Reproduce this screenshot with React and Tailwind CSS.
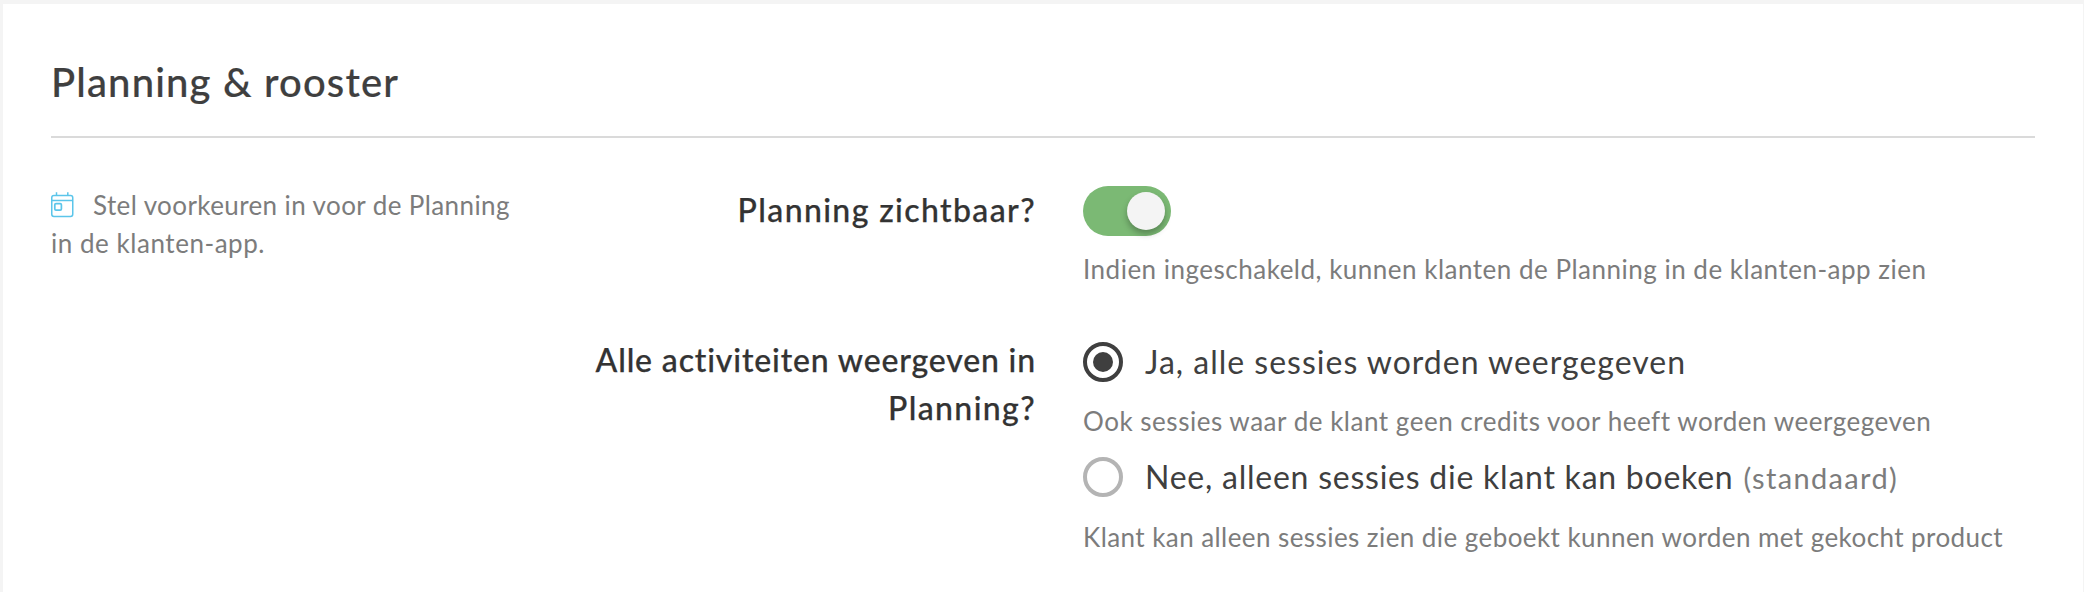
import { useState } from "react";

const options = [
  {
    value: "all",
    label: "Ja, alle sessies worden weergegeven",
    labelClass: "tracking-[1px]",
    hint: "Ook sessies waar de klant geen credits voor heeft worden weergegeven",
    hintClass: "tracking-[0.52px]",
  },
  {
    value: "bookable",
    label: "Nee, alleen sessies die klant kan boeken",
    labelClass: "tracking-[0.76px]",
    note: "(standaard)",
    hint: "Klant kan alleen sessies zien die geboekt kunnen worden met gekocht product",
    hintClass: "tracking-[0.43px]",
  },
];

const CalendarIcon = () => (
  <svg
    className="mr-[18px] inline-block h-[26px] w-6 align-[-3px]"
    viewBox="0 0 24 26"
    fill="none"
    stroke="#5bc5ea"
    strokeWidth="1.5"
  >
    <rect x="0.75" y="3.5" width="21" height="21" rx="2.2" />
    <path d="M0.75 8.5h21M5.5 0.3v3.2M16.8 0.3v3.2" />
    <rect x="3.8" y="11.6" width="6.6" height="6.6" rx="1.2" strokeWidth="1.7" />
  </svg>
);

const Toggle = ({ checked, onChange }) => (
  <button
    type="button"
    role="switch"
    aria-checked={checked}
    onClick={() => onChange(!checked)}
    className={`flex h-[50px] w-[88px] items-center rounded-full px-1.5 ${
      checked ? "justify-end bg-[#7bb974]" : "justify-start bg-[#b4b4b4]"
    }`}
  >
    <span className="size-[38px] rounded-full bg-[#f4f4f4] shadow-[0_4px_6px_rgba(0,0,0,0.28)]" />
  </button>
);

const Radio = ({ checked }) => (
  <span
    className={`mt-1 flex size-10 shrink-0 items-center justify-center rounded-full border-4 ${
      checked ? "border-[#3f3f3f]" : "border-[#b4b4b4]"
    }`}
  >
    {checked && <span className="size-5 rounded-full bg-[#3f3f3f]" />}
  </span>
);

const Hint = ({ className, children }) => (
  <p className={`whitespace-nowrap text-[26px] leading-[38px] text-[#7c7c7c] ${className}`}>
    {children}
  </p>
);

const App = () => {
  const [visible, setVisible] = useState(true);
  const [mode, setMode] = useState("all");

  return (
    <div className="h-screen overflow-hidden bg-[#f4f4f4] pt-1 pr-px pl-[3px] font-['Lato',sans-serif]">
      <section className="h-full bg-white px-12 pt-[54px]">
        <h2 className="border-b-2 border-[#dadada] pb-[30px] text-[40px] leading-[48px] font-medium tracking-[1.16px] text-[#3f3f3f] [-webkit-text-stroke:0.2px]">
          Planning &amp; rooster
        </h2>

        <div className="flex pt-12">
          <p className="w-[480px] shrink-0 text-[26px] leading-[38px] text-[#7c7c7c]">
            <CalendarIcon />
            <span className="tracking-[0.4px]">Stel voorkeuren in voor de Planning</span>
            <br />
            <span className="tracking-[0.54px]">in de klanten-app.</span>
          </p>

          <div className="flex flex-col gap-12">
            <div className="flex gap-[47px]">
              <div className="w-[505px] text-right text-[32px] leading-[48px] font-medium tracking-[1.38px] text-[#333] [-webkit-text-stroke:0.25px]">
                Planning zichtbaar?
              </div>
              <div>
                <Toggle checked={visible} onChange={setVisible} />
                <Hint className="mt-[14px] tracking-[0.5px]">
                  Indien ingeschakeld, kunnen klanten de Planning in de klanten-app zien
                </Hint>
              </div>
            </div>

            <div className="flex gap-[47px]">
              <div className="w-[505px] text-right text-[32px] leading-[48px] font-medium tracking-[0.84px] text-[#333] [-webkit-text-stroke:0.25px]">
                Alle activiteiten weergeven in
                <br />
                <span className="tracking-[1.38px]">Planning?</span>
              </div>
              <div className="flex flex-col gap-[13px] pt-0.5">
                {options.map((option) => (
                  <div key={option.value}>
                    <div
                      role="radio"
                      aria-checked={mode === option.value}
                      onClick={() => setMode(option.value)}
                      className="flex cursor-pointer gap-[22px] whitespace-nowrap text-[32px] leading-[48px] text-[#3f3f3f]"
                    >
                      <Radio checked={mode === option.value} />
                      <span className={option.labelClass}>
                        {option.label}
                        {option.note && (
                          <span className="ml-[10px] text-[29px] tracking-[1.35px] text-[#7c7c7c]">
                            {option.note}
                          </span>
                        )}
                      </span>
                    </div>
                    <Hint className={`mt-4 ${option.hintClass}`}>{option.hint}</Hint>
                  </div>
                ))}
              </div>
            </div>
          </div>
        </div>
      </section>
    </div>
  );
};

export default App;
